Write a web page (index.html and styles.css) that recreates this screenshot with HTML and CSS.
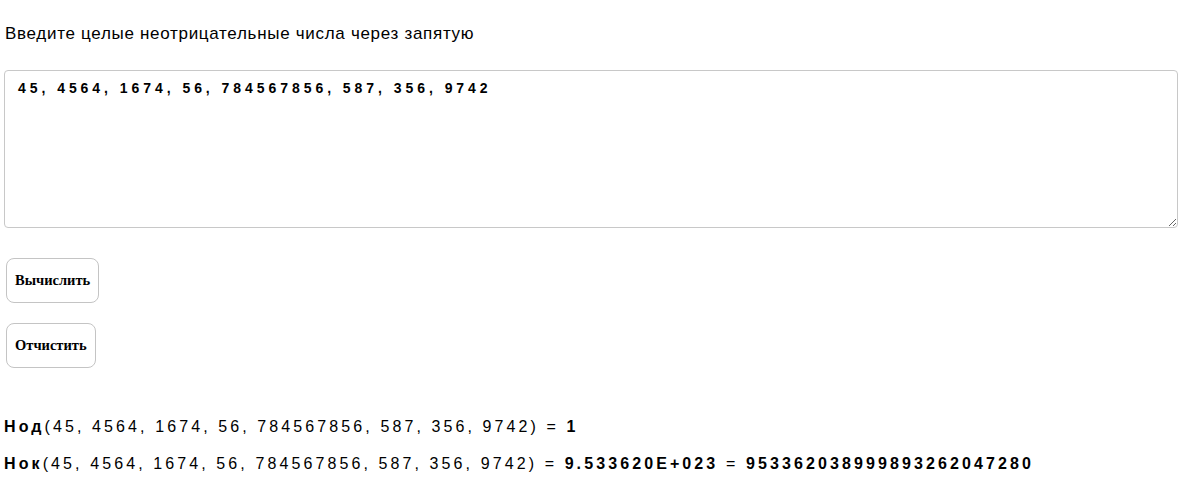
FILE: index.html
```html
<!DOCTYPE html>
<html lang="ru">
<head>
<meta charset="utf-8">
<title>НОД и НОК</title>
<link rel="stylesheet" href="styles.css">
</head>
<body>
<div class="page">
  <p class="label">Введите целые неотрицательные числа через запятую</p>
  <textarea class="numbers">45, 4564, 1674, 56, 784567856, 587, 356, 9742</textarea>
  <div class="actions">
    <button class="btn">Вычислить</button>
    <button class="btn">Отчистить</button>
  </div>
  <div class="results">
    <p class="result"><b>Нод</b>(45, 4564, 1674, 56, 784567856, 587, 356, 9742) = <b>1</b></p>
    <p class="result"><b>Нок</b>(45, 4564, 1674, 56, 784567856, 587, 356, 9742) = <b>9.533620E+023</b> = <b>953362038999893262047280</b></p>
  </div>
</div>
</body>
</html>
```
FILE: styles.css
```css
html, body {
  margin: 0;
  padding: 0;
  background: #fff;
}
.page {
  padding: 0 4px;
  font-family: "Liberation Sans", Arial, sans-serif;
  color: #000;
}
.label {
  margin: 0;
  padding-top: 24px;
  font-size: 17px;
  line-height: 20px;
  letter-spacing: 0.7px;
  padding-left: 1px;
}
.numbers {
  display: block;
  box-sizing: border-box;
  margin-top: 26px;
  width: 1174px;
  height: 158px;
  padding: 9px 13px;
  border: 1px solid #c8c8c8;
  border-radius: 4px;
  font-family: "Liberation Sans", Arial, sans-serif;
  font-weight: bold;
  font-size: 14px;
  letter-spacing: 3.95px;
  color: #000;
  resize: both;
}
.actions {
  display: flex;
  flex-direction: column;
  align-items: flex-start;
  gap: 20px;
  margin-top: 30px;
  padding-left: 2px;
}
.btn {
  height: 45px;
  padding: 0 8px;
  background: #fff;
  border: 1px solid #c4c4c4;
  border-radius: 8px;
  font-family: "Liberation Serif", "Times New Roman", serif;
  font-weight: bold;
  font-size: 14.5px;
  color: #000;
}
.results {
  margin-top: 49px;
}
.result {
  margin: 0 0 17px 0;
  font-size: 16px;
  line-height: 20px;
  letter-spacing: 3.1px;
}
```
